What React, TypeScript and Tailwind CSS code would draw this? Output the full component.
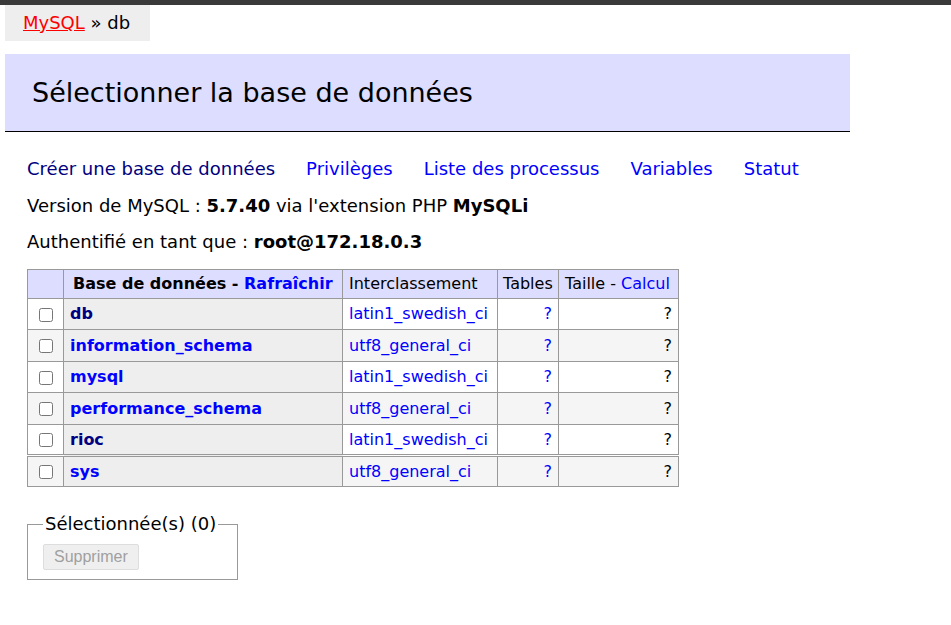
import React from "react"

const databases = [
    { name: "db", collation: "latin1_swedish_ci", visited: true },
    { name: "information_schema", collation: "utf8_general_ci", visited: false },
    { name: "mysql", collation: "latin1_swedish_ci", visited: false },
    { name: "performance_schema", collation: "utf8_general_ci", visited: false },
    { name: "rioc", collation: "latin1_swedish_ci", visited: true },
    { name: "sys", collation: "utf8_general_ci", visited: false },
]

const links = [
    { title: "Créer une base de données", visited: true },
    { title: "Privilèges", visited: false },
    { title: "Liste des processus", visited: false },
    { title: "Variables", visited: false },
    { title: "Statut", visited: false },
]

export default function App() {
    return (
        <div className="min-h-[625px] bg-white text-black text-[18px] leading-[1.25] font-['DejaVu_Sans',Verdana,sans-serif]">
            <div className="h-[5px] bg-[#3a3a3a]" />

            <div className="px-[5px]">
                <div className="flex h-[36px] w-[145px] items-center bg-[#eeeeee] pl-[18px]">
                    <a href="#" className="text-[#ff0000] underline">MySQL</a>
                    <span>&nbsp;» db</span>
                </div>

                <h2 className="mt-[13px] flex h-[78px] w-[845px] items-center border-b border-black bg-[#ddddff] pl-[27px] text-[27px] font-normal">
                    Sélectionner la base de données
                </h2>
            </div>

            <div className="pl-[27px] pt-[19px]">
                <div className="flex h-[37px] items-center gap-[31px]">
                    {links.map((link) => (
                        <a
                            key={link.title}
                            href="#"
                            className={link.visited ? "text-[#000080]" : "text-[#0000ff]"}
                        >
                            {link.title}
                        </a>
                    ))}
                </div>
                <p className="flex h-[36px] items-center">
                    Version de MySQL :&nbsp;<b>5.7.40</b>&nbsp;via l'extension PHP&nbsp;<b>MySQLi</b>
                </p>
                <p className="flex h-[36px] items-center">
                    Authentifié en tant que :&nbsp;<b>root@172.18.0.3</b>
                </p>

                <table className="mt-[9px] border-collapse border border-[#999999] text-[16px] leading-[1.25]">
                    <thead>
                        <tr className="h-[29px] bg-[#ddddff]">
                            <td className="w-[36px] border border-[#999999]" />
                            <th className="w-[279px] border border-[#999999] pl-[9px] text-left font-bold">
                                Base de données - <a href="#" className="text-[#0000ff]">Rafraîchir</a>
                            </th>
                            <td className="w-[155px] border border-[#999999] px-[6px]">Interclassement</td>
                            <td className="w-[61px] border border-[#999999] px-[5px]">Tables</td>
                            <td className="w-[120px] border border-[#999999] px-[6px]">
                                Taille - <a href="#" className="text-[#0000ff]">Calcul</a>
                            </td>
                        </tr>
                    </thead>
                    <tbody>
                        {databases.map((db, i) => (
                            <tr
                                key={db.name}
                                className={`${i === 1 || i === 3 ? "h-[32px]" : "h-[31px]"} ${i % 2 === 1 ? "bg-[#f5f5f5]" : "bg-white"} ${db.name === "sys" ? "border-t-[3px] border-double border-[#999999]" : ""}`}
                            >
                                <td className="border border-[#999999] text-center">
                                    <input type="checkbox" className="m-0 h-[14px] w-[14px] align-middle" />
                                </td>
                                <th className="border border-[#999999] bg-[#eeeeee] px-[6px] text-left font-bold">
                                    <a href="#" className={db.visited ? "text-[#000080]" : "text-[#0000ff]"}>
                                        {db.name}
                                    </a>
                                </th>
                                <td className="border border-[#999999] px-[6px]">
                                    <a href="#" className="text-[#0000ff]">{db.collation}</a>
                                </td>
                                <td className="border border-[#999999] px-[6px] text-right">
                                    <a href="#" className="text-[#0000ff]">?</a>
                                </td>
                                <td className="border border-[#999999] px-[6px] text-right">?</td>
                            </tr>
                        ))}
                    </tbody>
                </table>

                <fieldset className="mt-[26px] w-[211px] border border-[#999999] px-[15px] pb-[9px]">
                    <legend className="px-[2px]">Sélectionnée(s) (0)</legend>
                    <button
                        type="button"
                        disabled
                        className="mt-[8px] h-[26px] rounded-[2px] border border-[#dddddd] bg-[#efefef] px-[10px] text-[16px] text-[#a0a0a0] font-['Liberation_Sans',Arial,sans-serif]"
                    >
                        Supprimer
                    </button>
                </fieldset>
            </div>
        </div>
    )
}
